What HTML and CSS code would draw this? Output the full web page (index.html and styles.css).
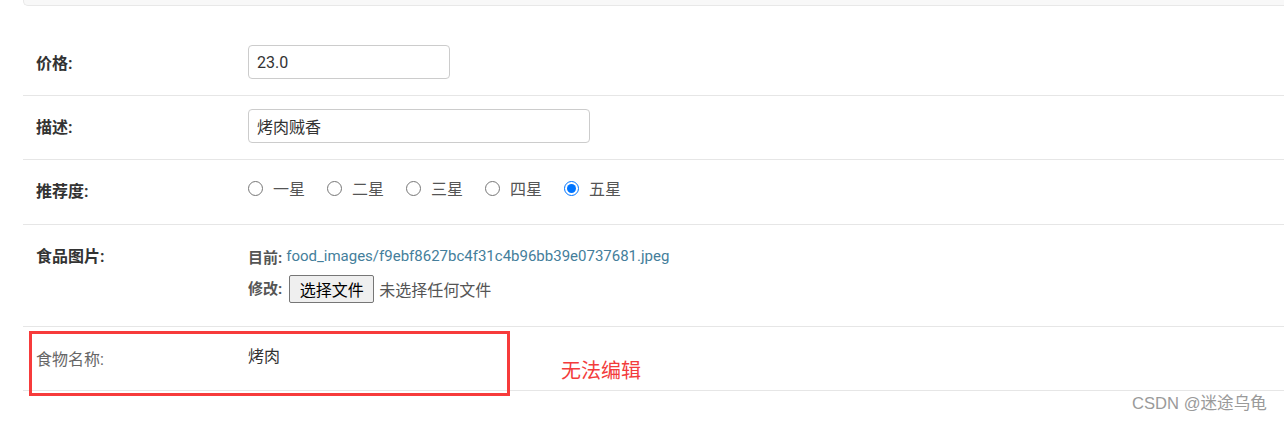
FILE: index.html
```html
<!DOCTYPE html>
<html lang="zh-CN">
<head>
<meta charset="utf-8">
<title>食品编辑</title>
<link rel="stylesheet" href="styles.css">
</head>
<body>
<div class="page">
  <div class="top-panel"></div>
  <div class="form">
    <div class="row row-first">
      <label class="label">价格:</label>
      <div class="field"><input class="text-input w-short" type="text" value="23.0"></div>
    </div>
    <div class="row">
      <label class="label">描述:</label>
      <div class="field"><input class="text-input w-long" type="text" value="烤肉贼香"></div>
    </div>
    <div class="row row-radio">
      <label class="label">推荐度:</label>
      <div class="field radios">
        <label class="radio"><input type="radio" name="star"><span>一星</span></label>
        <label class="radio"><input type="radio" name="star"><span>二星</span></label>
        <label class="radio"><input type="radio" name="star"><span>三星</span></label>
        <label class="radio"><input type="radio" name="star"><span>四星</span></label>
        <label class="radio"><input type="radio" name="star" checked><span>五星</span></label>
      </div>
    </div>
    <div class="row row-file">
      <label class="label">食品图片:</label>
      <div class="field file-field">
        <p class="file-line current"><b>目前:</b> <a class="link" href="#">food_images/f9ebf8627bc4f31c4b96bb39e0737681.jpeg</a></p>
        <p class="file-line change"><b>修改:</b><button class="file-btn" type="button">选择文件</button><span class="no-file">未选择任何文件</span></p>
      </div>
    </div>
    <div class="row row-readonly">
      <label class="label label-ro">食物名称:</label>
      <div class="field readonly">烤肉</div>
    </div>
  </div>
  <div class="mark-box"></div>
  <div class="mark-text">无法编辑</div>
  <div class="watermark">CSDN @迷途乌龟</div>
</div>
</body>
</html>
```
FILE: styles.css
```css
* { box-sizing: border-box; }
html, body { margin: 0; padding: 0; background: #fff; }
body {
  font-family: Roboto, "Noto Sans CJK SC", sans-serif;
  color: #333;
  width: 1284px;
  height: 423px;
  overflow: hidden;
}
.page {
  position: relative;
  height: 423px;
  padding-left: 23px;
}
.top-panel {
  height: 7px;
  margin-top: -1px;
  background: #f8f8f8;
  border: 1px solid #e8e8e8;
  border-right: none;
  border-radius: 0 0 0 5px;
}
.form {
  margin-top: 26px;
}
.row {
  display: flex;
  align-items: flex-start;
  padding: 13px 0 16px 13px;
  border-bottom: 1px solid #e6e6e6;
  min-height: 64px;
}
.row-radio {
  min-height: 65px;
}
.label {
  width: 212px;
  flex: none;
  font-size: 16px;
  line-height: 20px;
  font-weight: bold;
  color: #333;
  padding-top: 9px;
}
.field {
  flex: 1;
}
.text-input {
  display: block;
  height: 34px;
  border: 1px solid #ccc;
  border-radius: 4px;
  padding: 0 8px;
  font-family: Roboto, "Noto Sans CJK SC", sans-serif;
  font-size: 16px;
  color: #333;
  background: #fff;
  outline: none;
}
.w-short { width: 202px; }
.w-long { width: 342px; }

.radios {
  display: flex;
  align-items: center;
  height: 30px;
  gap: 22px;
}
.radio {
  display: flex;
  align-items: center;
  font-size: 16px;
  color: #555;
}
.radio input {
  margin: 0 10px 0 0;
  width: 15px;
  height: 15px;
}

.file-field {
  padding-top: 8px;
}
.file-line {
  margin: 0;
  display: flex;
  align-items: center;
  font-size: 15px;
  color: #666;
}
.file-line b {
  color: #555;
  font-weight: bold;
  font-size: 15px;
}
.current {
  height: 20px;
}
.current b { margin-right: 4px; }
.link {
  color: #447e9b;
  text-decoration: none;
}
.change {
  margin-top: 9px;
  margin-bottom: 7px;
  align-items: flex-start;
}
.change b {
  padding-top: 2px;
}
.file-btn {
  margin-left: 7px;
  width: 85px;
  height: 28px;
  padding: 0;
  font-family: "Noto Sans CJK SC", sans-serif;
  font-size: 16px;
  color: #000;
  background: #efefef;
  border: 1px solid #767676;
  border-radius: 2px;
}
.no-file {
  margin-left: 5px;
  font-size: 16px;
  line-height: 28px;
  color: #555;
  font-family: "Noto Sans CJK SC", sans-serif;
}

.label-ro {
  font-weight: normal;
  color: #666;
  padding-top: 10px;
}
.readonly {
  font-size: 16px;
  line-height: 20px;
  padding-top: 7px;
  color: #333;
}

.mark-box {
  position: absolute;
  left: 29px;
  top: 332px;
  width: 481px;
  height: 65px;
  border: 3px solid #f73b3b;
}
.mark-text {
  position: absolute;
  left: 561px;
  top: 358px;
  font-family: "Noto Sans CJK SC", sans-serif;
  font-size: 20px;
  line-height: 26px;
  color: #f33c3c;
}
.watermark {
  position: absolute;
  left: 1132px;
  top: 394px;
  font-family: "Liberation Sans", "Noto Sans CJK SC", sans-serif;
  font-size: 16.6px;
  line-height: 22px;
  color: #9a9a9a;
  white-space: nowrap;
}
```
